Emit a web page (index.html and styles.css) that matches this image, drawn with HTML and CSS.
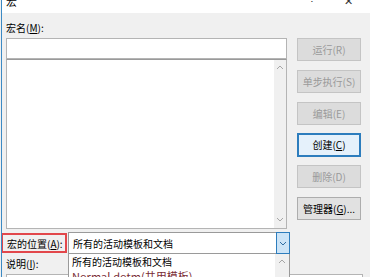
FILE: index.html
```html
<html>
<head>
  <link rel="stylesheet" href="styles.css">
</head>
<body>
<div class="window">
  <div class="titlebar">
    <span class="title">宏</span>
    <span class="title-help">?</span>
    <span class="title-close">✕</span>
  </div>
  <div class="dialog">
    <div class="main">
      <div class="left">
        <div class="label">宏名(<u>M</u>):</div>
        <div class="name-input"></div>
        <div class="listbox">
          <div class="list-area"></div>
          <div class="scrollbar">
            <svg width="8" height="5" viewBox="0 0 8 5"><polyline points="1,4 4,1 7,4" fill="none" stroke="#a6a6a6" stroke-width="1"/></svg>
            <svg width="8" height="5" viewBox="0 0 8 5"><polyline points="1,1 4,4 7,1" fill="none" stroke="#a6a6a6" stroke-width="1"/></svg>
          </div>
        </div>
      </div>
      <div class="buttons">
        <div class="btn disabled">运行(R)</div>
        <div class="btn disabled">单步执行(S)</div>
        <div class="btn disabled">编辑(E)</div>
        <div class="btn default">创建(<u>C</u>)</div>
        <div class="btn disabled">删除(D)</div>
        <div class="btn">管理器(<u>G</u>)...</div>
      </div>
    </div>
    <div class="location-row">
      <div class="location-label">宏的位置(<u>A</u>):</div>
      <div class="combo">
        <span class="combo-text">所有的活动模板和文档</span>
        <div class="combo-btn">
          <svg width="8" height="5" viewBox="0 0 8 5"><polyline points="1,1 4,4 7,1" fill="none" stroke="#2d6da3" stroke-width="1"/></svg>
        </div>
        <div class="dropdown">
          <div class="dropdown-items">
            <div class="dropdown-item">所有的活动模板和文档</div>
            <div class="dropdown-item marked">Normal.dotm(共用模板)</div>
          </div>
          <div class="dropdown-scroll">
            <svg width="8" height="5" viewBox="0 0 8 5"><polyline points="1,4 4,1 7,4" fill="none" stroke="#a6a6a6" stroke-width="1"/></svg>
          </div>
        </div>
      </div>
    </div>
    <div class="desc-label">说明(<u>I</u>):</div>
    <div class="desc-box"></div>
  </div>
</div>
</body>
</html>
```

FILE: styles.css
```css
body {
  margin: 0;
  padding: 0;
  overflow: hidden;
  font-family: "Noto Sans CJK SC", "Noto Sans", sans-serif;
  font-size: 10px;
  color: #000;
  background: #f0f0f0;
}

u {
  text-decoration: underline;
  text-underline-offset: 1px;
}

.window {
  width: 369px;
  height: 277px;
  overflow: hidden;
  margin-left: 1px;
  box-sizing: border-box;
  border-left: 1px solid #3c8ac4;
  background: #f0f0f0;
}

.titlebar {
  height: 13px;
  background: #fff;
  display: flex;
  align-items: flex-start;
  overflow: hidden;
}

.title {
  margin-left: 4px;
  margin-top: -7px;
  font-size: 11px;
}

.title-help {
  margin-left: auto;
  margin-top: -8px;
  font-family: "Liberation Sans", sans-serif;
  font-size: 11px;
  color: #333;
}

.title-close {
  margin-left: 29px;
  margin-right: 17px;
  margin-top: -8px;
  font-size: 11px;
  color: #333;
}

.dialog {
  padding-left: 4px;
}

.main {
  display: flex;
  gap: 10px;
}

.left {
  width: 281px;
}

.label {
  height: 14px;
  line-height: 14px;
  margin-top: 8px;
  margin-bottom: 3px;
}

.name-input {
  height: 19px;
  background: #fff;
  border: 1px solid #b4b4b4;
}

.listbox {
  height: 168px;
  display: flex;
  background: #fff;
  border: 1px solid #b4b4b4;
  border-top: 1px solid #9a9a9a;
}

.list-area {
  flex: 1;
}

.scrollbar {
  width: 12px;
  background: #f0f0f0;
  display: flex;
  flex-direction: column;
  align-items: center;
  justify-content: space-between;
  padding: 5px 0 6px;
}

.buttons {
  width: 64px;
  padding-top: 25px;
  display: flex;
  flex-direction: column;
  gap: 9px;
}

.btn {
  height: 21px;
  line-height: 21px;
  text-align: center;
  background: #e1e1e1;
  border: 1px solid #adadad;
  white-space: nowrap;
}

.btn.disabled {
  background: #dcdcdc;
  border-color: #c4c4c4;
  color: #9a9a9a;
}

.btn.default {
  height: 20px;
  line-height: 20px;
  background: #e5f1fb;
  border: 2px solid #2d7dbd;
  margin-top: -1px;
  margin-bottom: -1px;
}

.location-row {
  display: flex;
  align-items: center;
  margin-top: 3px;
  margin-left: -5px;
}

.location-label {
  width: 66px;
  height: 20px;
  line-height: 18px;
  box-sizing: border-box;
  padding-left: 4px;
  border: 2px solid #e2474b;
  white-space: nowrap;
}

.combo {
  position: relative;
  width: 220px;
  height: 20px;
  margin-left: 1px;
  display: flex;
  align-items: center;
  background: #fff;
  border: 1px solid #9a9a9a;
}

.combo-text {
  padding-left: 4px;
  flex: 1;
}

.combo-btn {
  width: 12px;
  height: 20px;
  margin-right: -1px;
  display: flex;
  align-items: center;
  justify-content: center;
  background: #cce4f7;
  border: 1px solid #2d7dbd;
}

.dropdown {
  position: absolute;
  top: 21px;
  left: -1px;
  width: 220px;
  height: 30px;
  display: flex;
  background: #fff;
  border: 1px solid #9a9a9a;
  border-top: none;
  z-index: 2;
}

.dropdown-items {
  flex: 1;
  padding-top: 1px;
  padding-left: 3px;
}

.dropdown-item {
  height: 14px;
  line-height: 14px;
  white-space: nowrap;
}

.dropdown-item.marked {
  color: #7a2c35;
  font-size: 11px;
}

.dropdown-scroll {
  width: 14px;
  background: #f0f0f0;
  display: flex;
  justify-content: center;
  padding-top: 5px;
}

.desc-label {
  height: 14px;
  line-height: 14px;
  margin-top: 3px;
}

.desc-box {
  height: 20px;
  width: 355px;
  margin-top: 3px;
  background: #fff;
  border: 1px solid #b4b4b4;
}
```
